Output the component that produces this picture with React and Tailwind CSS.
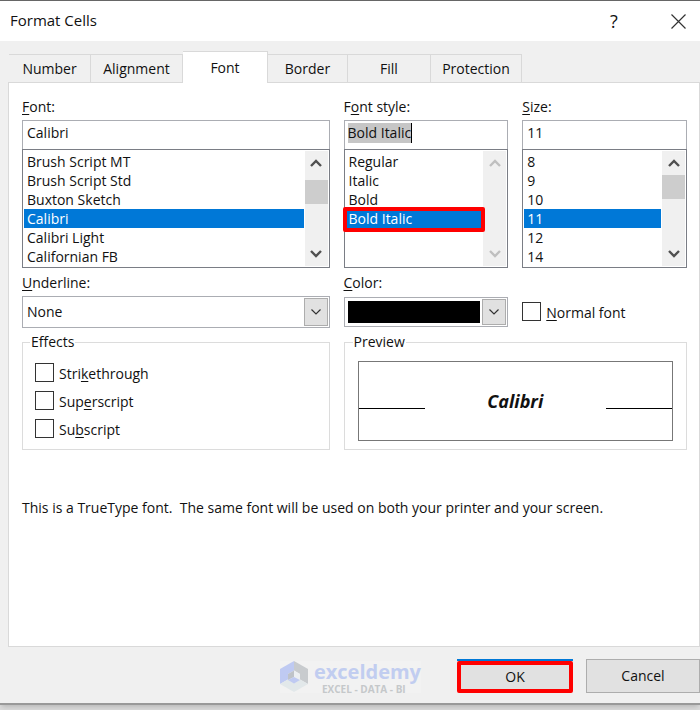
import React from 'react';

const TABS = ['Number', 'Alignment', 'Font', 'Border', 'Fill', 'Protection'];

const TAB_WIDTHS = {
  Number: 'w-[82px]',
  Alignment: 'w-[92px]',
  Font: 'w-[85px]',
  Border: 'w-20',
  Fill: 'w-[83px]',
  Protection: 'w-[91px]',
};

const FONTS = ['Brush Script MT', 'Brush Script Std', 'Buxton Sketch', 'Calibri', 'Calibri Light', 'Californian FB'];
const STYLES = ['Regular', 'Italic', 'Bold', 'Bold Italic'];
const SIZES = ['8', '9', '10', '11', '12', '14'];

const Chevron = ({ up }) => (
  <svg width="12" height="8" viewBox="0 0 12 8" fill="none" stroke="currentColor" strokeWidth="2.4" aria-hidden="true">
    <path d={up ? 'M1 7L6 2L11 7' : 'M1 1L6 6L11 1'} />
  </svg>
);

const DropArrow = () => (
  <svg width="10" height="6" viewBox="0 0 10 6" fill="none" stroke="#333" strokeWidth="1.2" aria-hidden="true">
    <path d="M0.5 0.5L5 5L9.5 0.5" />
  </svg>
);

// The underlined letter is the keyboard shortcut
const Mnemonic = ({ before = '', letter, after }) => (
  <span>{before}<span className="underline underline-offset-2">{letter}</span>{after}</span>
);

const ScrollBar = ({ thumb, disabled }) => (
  <div className={`flex w-[23px] shrink-0 flex-col items-center bg-[#f0f0f0] ${disabled ? 'text-[#bfbfbf]' : 'text-[#505050]'}`}>
    <button type="button" aria-label="Scroll up" disabled={disabled} className="flex h-6 w-full items-center justify-center"><Chevron up /></button>
    <div className={`w-full flex-1 ${thumb === 'lower' ? 'pt-[5px]' : ''}`}>
      {thumb && <div className="h-6 w-full bg-[#cdcdcd]" />}
    </div>
    <button type="button" aria-label="Scroll down" disabled={disabled} className="flex h-6 w-full items-center justify-center"><Chevron /></button>
  </div>
);

const ListField = ({ id, label, value, items, thumb, highlighted, selectedText }) => (
  <div className="flex min-w-0 flex-col">
    <label htmlFor={id} className="mb-[3px] h-5 leading-5">{label}</label>
    <div className="relative">
      <input
        id={id}
        defaultValue={value}
        className={`block h-[29px] w-full border border-b-0 border-[#abadb3] pb-[5px] pl-1 outline-none ${selectedText ? 'text-transparent' : 'bg-white'}`}
      />
      {selectedText && (
        <span className="pointer-events-none absolute top-[3px] left-1 border-r border-black bg-[#c6c6c6] leading-5" aria-hidden="true">{value}</span>
      )}
    </div>
    <div className="flex h-[119px] border border-[#7a7d85] p-px">
      <ul role="listbox" aria-label={id} className="min-w-0 flex-1 pt-px pr-px">
        {items.map((item) => (
          <li
            key={item}
            role="option"
            aria-selected={item === value}
            className={`relative h-[19px] pl-[3px] leading-[19px] ${item === value ? 'bg-[#0078d7] text-white' : ''}`}
          >
            {item}
            {highlighted && item === value && (
              <span className="absolute -inset-x-[3px] -top-[2px] -bottom-1 rounded-xs border-4 border-[#ff0000]" />
            )}
          </li>
        ))}
      </ul>
      <ScrollBar thumb={thumb} disabled={!thumb} />
    </div>
  </div>
);

const Check = ({ children }) => (
  <label className="flex h-[19px] items-center gap-[5px]">
    <input type="checkbox" className="size-[19px] shrink-0 appearance-none border border-[#333] bg-white" />
    <span className="mt-0.5">{children}</span>
  </label>
);

const Watermark = () => (
  <div className="mr-9 flex h-8 items-center gap-1.5 bg-[#f2f2f2]">
    <svg width="28" height="32" viewBox="0 0 28 32" aria-hidden="true">
      <path d="M14 0L0 8V23L8 18.500V13L14 9.500Z" fill="#bfcaf2" />
      <path d="M14 0L28 8V23L20 18.500V13L14 9.500Z" fill="#c8cbce" />
      <path d="M0 23L8 18.500L14 22L20 18.500L28 23L14 31Z" fill="#e2e8ea" />
      <path d="M14 9.500L8 13V19L14 16Z" fill="#bfc3c9" />
      <path d="M14 9.500L20 13V19L14 16Z" fill="#eceff2" />
      <path d="M14 16L20 19L14 22.500L8 19Z" fill="#bfcaf2" />
    </svg>
    <div className="flex flex-col font-bold">
      <span className="text-xl leading-6 text-[#c1cdf0]">exceldemy</span>
      <span className="pl-2 text-[10px] leading-[10px] text-[#c5c8ca]">EXCEL - DATA - BI</span>
    </div>
  </div>
);

const App = () => {
  return (
    <div className="min-h-screen bg-[#dcdcdc] font-['Open_Sans','Noto_Sans',sans-serif] text-sm text-[#111]">
      <main className="flex flex-col border-t border-b-2 border-t-[#666] border-b-[#999] bg-[#f0f0f0] shadow-md">
        <header className="flex h-10 items-center bg-white pl-[10px]">
          <h1 className="flex-1 text-[15px]">Format Cells</h1>
          <button type="button" aria-label="Help" className="w-11 text-lg">?</button>
          <button type="button" aria-label="Close" className="flex w-16 justify-center pl-5">
            <svg width="15" height="15" viewBox="0 0 15 15" stroke="#333" strokeWidth="1.2" aria-hidden="true">
              <path d="M0.500 0.500L14.500 14.500M14.500 0.500L0.500 14.500" />
            </svg>
          </button>
        </header>

        <div className="pt-[10px] pl-2">
          <div role="tablist" className="relative flex items-end pl-px">
            {TABS.map((tab) => (
              <button
                key={tab}
                type="button"
                role="tab"
                aria-selected={tab === 'Font'}
                className={`shrink-0 border-t border-r border-[#d9d9d9] ${TAB_WIDTHS[tab]} ${tab === 'Font' ? '-mb-px h-8 bg-white' : 'h-7'}`}
              >
                {tab}
              </button>
            ))}
          </div>

          <section className="min-h-[565px] border border-[#d9d9d9] bg-white pt-[14px] pr-3 pl-[13px]">
            <div className="grid grid-cols-[308fr_165fr_165fr] gap-x-[14px]">
              <ListField id="font" label={<Mnemonic letter="F" after="ont:" />} value="Calibri" items={FONTS} thumb="lower" />
              <ListField id="style" label={<Mnemonic before="F" letter="o" after="nt style:" />} value="Bold Italic" items={STYLES} highlighted selectedText />
              <ListField id="size" label={<Mnemonic letter="S" after="ize:" />} value="11" items={SIZES} thumb="upper" />

              <div className="mt-[5px] flex flex-col">
                <label htmlFor="underline" className="mb-[3px] h-5 leading-5"><Mnemonic letter="U" after="nderline:" /></label>
                <div className="relative h-8 border border-[#abadb3]">
                  <select id="underline" className="h-full w-full appearance-none bg-white pl-1">
                    <option>None</option>
                  </select>
                  <span className="pointer-events-none absolute inset-y-px right-px flex w-6 items-center justify-center border border-[#adadad] bg-[#e1e1e1]"><DropArrow /></span>
                </div>
              </div>
              <div className="mt-[5px] flex flex-col">
                <label htmlFor="color" className="mb-1 h-5 leading-5"><Mnemonic letter="C" after="olor:" /></label>
                <div className="flex h-[30px] border border-[#abadb3] p-px">
                  <select id="color" className="m-0.5 min-w-0 flex-1 appearance-none bg-black">
                    <option value="#000000" aria-label="Black" />
                  </select>
                  <span className="flex w-6 items-center justify-center border border-[#adadad] bg-[#e1e1e1]"><DropArrow /></span>
                </div>
              </div>
              <div className="mt-[34px]">
                <Check><Mnemonic letter="N" after="ormal font" /></Check>
              </div>

              <fieldset className="mt-1 h-[118px] border border-[#dcdcdc] pl-3">
                <legend className="-ml-[5px] px-px leading-5">Effects</legend>
                <div className="mt-[11px] flex flex-col gap-[9px]">
                  <Check><Mnemonic before="Stri" letter="k" after="ethrough" /></Check>
                  <Check><Mnemonic before="Sup" letter="e" after="rscript" /></Check>
                  <Check><Mnemonic before="Su" letter="b" after="script" /></Check>
                </div>
              </fieldset>
              <fieldset className="col-span-2 mt-1 h-[118px] border border-[#dcdcdc] px-[13px]">
                <legend className="-ml-[5px] px-px leading-5">Preview</legend>
                <div className="mt-[9px] flex h-20 items-center border border-[#777]">
                  <span className="mt-[14px] h-px w-[66px] bg-black" />
                  <span className="flex-1 text-center text-lg font-bold italic">Calibri</span>
                  <span className="mt-[14px] h-px w-[66px] bg-black" />
                </div>
              </fieldset>
            </div>
            <p className="mt-12 leading-5 whitespace-pre-wrap">{'This is a TrueType font.  The same font will be used on both your printer and your screen.'}</p>
          </section>
        </div>

        <footer className="flex items-end justify-end pt-3 pb-[10px]">
          <Watermark />
          <div className="mr-[13px] border-t-2 border-[#0078d7]">
            <button type="button" className="block h-8 w-[116px] rounded-xs border-4 border-[#ff0000] bg-[#e1e1e1]">OK</button>
          </div>
          <button type="button" className="h-[34px] w-[114px] border border-[#adadad] bg-[#e1e1e1]">Cancel</button>
        </footer>
      </main>
    </div>
  );
};

export default App;
